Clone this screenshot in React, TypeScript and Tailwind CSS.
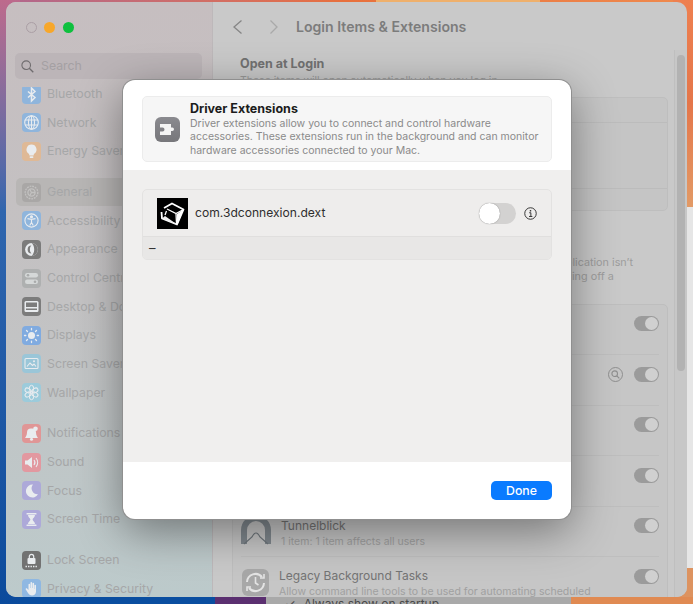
import React from "react";

const W = "#e9ecef";

const glyphs: Record<string, React.ReactNode> = {
  Bluetooth: <path d="M6 6.5l7 6-3.5 3.5V3L13 6.5l-7 6" fill="none" stroke={W} strokeWidth="1.5" />,
  Network: (
    <g fill="none" stroke={W} strokeWidth="1.1">
      <circle cx="9.5" cy="9.5" r="6.8" />
      <ellipse cx="9.5" cy="9.5" rx="3" ry="6.8" />
      <path d="M3 7h13M3 12h13M9.5 2.7v13.6" />
    </g>
  ),
  "Energy Saver": (
    <g fill={W}>
      <path d="M9.5 2.5a5 5 0 0 0-3 9c.7.6.8 1.4.9 2h4.2c.1-.6.2-1.4.9-2a5 5 0 0 0-3-9z" />
      <rect x="7.6" y="14.2" width="3.8" height="1.8" rx=".8" />
    </g>
  ),
  General: (
    <g fill="none" stroke="#c2c1c0" strokeWidth="1.3">
      <circle cx="9.5" cy="9.5" r="6.3" strokeDasharray="1.8 .9" />
      <circle cx="9.5" cy="9.5" r="3.6" />
      <path d="M9.5 9.5L13 9.5M9.5 9.5L7.8 6.5M9.5 9.5L7.8 12.5" />
    </g>
  ),
  Accessibility: (
    <g fill="none" stroke={W} strokeWidth="1.1">
      <circle cx="9.5" cy="9.5" r="6.6" />
      <circle cx="9.5" cy="5.8" r="1" fill={W} />
      <path d="M5.5 7.6l4 .8 4-.8M9.5 8.4v3l-1.8 3.2M9.5 11.4l1.8 3.2" />
    </g>
  ),
  Appearance: (
    <g>
      <circle cx="9.5" cy="9.5" r="6.4" fill={W} />
      <path d="M9.5 5.6a3.9 3.9 0 0 0 0 7.8c-1.2-1-1.6-2.4-1.6-3.9s.4-2.900 1.600-3.900z" fill="#7b7b7b" />
      <path d="M9.500 3.100a6.400 6.400 0 0 1 0 12.800c1.800-1.500 2.700-3.800 2.700-6.400s-.9-4.900-2.700-6.400z" fill="#7b7b7b" />
    </g>
  ),
  "Control Centre": (
    <g fill="#d5d8d8">
      <rect x="3" y="4" width="13" height="4.500" rx="2.200" />
      <rect x="3" y="10.500" width="13" height="4.500" rx="2.200" />
      <circle cx="6" cy="6.200" r="1.300" fill="#a9abab" />
      <circle cx="13" cy="12.700" r="1.300" fill="#a9abab" />
    </g>
  ),
  "Desktop & Dock": (
    <g>
      <rect x="2.500" y="4" width="14" height="11" rx="1.500" fill={W} />
      <rect x="4" y="5.500" width="11" height="4.500" fill="#7c7c7c" />
      <rect x="4" y="11.500" width="11" height="1.500" fill="#7c7c7c" />
    </g>
  ),
  Displays: (
    <g fill={W}>
      <circle cx="9.500" cy="9.500" r="3.500" />
      <g stroke={W} strokeWidth="1.300" strokeLinecap="round">
        <path d="M9.500 2.500v1.300M9.500 15.200v1.300M2.500 9.500h1.300M15.200 9.500h1.300M4.500 4.500l1 1M13.500 13.500l1 1M4.500 14.500l1-1M13.500 5.500l1-1" />
      </g>
    </g>
  ),
  "Screen Saver": (
    <g fill="none" stroke={W} strokeWidth="1.100">
      <rect x="3" y="4.500" width="13" height="10" rx="1" />
      <path d="M5 12.500l3-3.500 2.500 2.500 1.500-1.500 2 2.500" />
      <circle cx="12" cy="7.300" r="1" fill={W} stroke="none" />
    </g>
  ),
  Wallpaper: (
    <g fill="none" stroke={W} strokeWidth="1">
      <ellipse cx="9.500" cy="5.500" rx="2.200" ry="3.200" />
      <ellipse cx="9.500" cy="13.500" rx="2.200" ry="3.200" />
      <ellipse cx="9.500" cy="5.500" rx="2.200" ry="3.200" transform="rotate(60 9.500 9.500)" />
      <ellipse cx="9.500" cy="5.500" rx="2.200" ry="3.200" transform="rotate(120 9.500 9.500)" />
      <ellipse cx="9.500" cy="5.500" rx="2.200" ry="3.200" transform="rotate(240 9.500 9.500)" />
      <ellipse cx="9.500" cy="5.500" rx="2.200" ry="3.200" transform="rotate(300 9.500 9.500)" />
    </g>
  ),
  Notifications: (
    <g fill={W}>
      <path d="M9 4.500a4 4 0 0 0-4 4c0 3-1.500 4.500-2 5.500h13c-.5-1-2-2.500-2-5.500a4 4 0 0 0-4-4z" />
      <circle cx="9.500" cy="15.300" r="1.500" />
      <circle cx="13.500" cy="4.800" r="2.300" />
    </g>
  ),
  Sound: (
    <g>
      <path d="M3 7.500h2.500L10 4v11l-4.500-3.500H3z" fill={W} />
      <path d="M12 7a4 4 0 0 1 0 5M14 5a7 7 0 0 1 0 9" fill="none" stroke={W} strokeWidth="1.100" />
    </g>
  ),
  Focus: <path d="M11 3.500a6.500 6.500 0 1 0 5 9.800 6 6 0 0 1-5-9.800z" fill={W} />,
  "Screen Time": (
    <g fill={W}>
      <rect x="4.500" y="3" width="10" height="1.600" rx=".5" />
      <rect x="4.500" y="14.400" width="10" height="1.600" rx=".5" />
      <path d="M6 5h7c0 2.500-2.400 3-2.400 4.500S13 11.500 13 14H6c0-2.500 2.400-3 2.400-4.500S6 7.500 6 5z" />
    </g>
  ),
  "Lock Screen": (
    <g>
      <rect x="5.500" y="7" width="8" height="6" rx="1" fill={W} />
      <path d="M7.300 7V5.500a2.200 2.200 0 0 1 4.400 0V7" fill="none" stroke={W} strokeWidth="1.200" />
      <path d="M3.500 15.500h12" stroke={W} strokeWidth="1.300" strokeDasharray="1.400 1.100" />
    </g>
  ),
  "Privacy & Security": (
    <path
      d="M6.500 5.500a.8.800 0 0 1 1.600 0V9h.4V3.800a.8.800 0 0 1 1.600 0V9h.4V4.500a.8.800 0 0 1 1.600 0V10h.3V6.500a.8.800 0 0 1 1.600 0v6c0 2.500-1.800 4-4 4-2 0-3-1-4-2.500L3.800 10.500c-.5-.8.500-1.800 1.300-1l1.400 1.500z"
      fill={W}
    />
  ),
};

type Item = { label: string; bg: string };

const groups: Item[][] = [
  [
    { label: "Bluetooth", bg: "bg-[#8fb5dc]" },
    { label: "Network", bg: "bg-[#8fb5dc]" },
    { label: "Energy Saver", bg: "bg-[#dfb996]" },
  ],
  [
    { label: "General", bg: "bg-[#a9a7a6]" },
    { label: "Accessibility", bg: "bg-[#8fb5dc]" },
    { label: "Appearance", bg: "bg-[#7b7b7b]" },
    { label: "Control Centre", bg: "bg-[#aeb0b0]" },
    { label: "Desktop & Dock", bg: "bg-[#7c7c7c]" },
    { label: "Displays", bg: "bg-[#80abe0]" },
    { label: "Screen Saver", bg: "bg-[#9ac6d8]" },
    { label: "Wallpaper", bg: "bg-[#9ccbdb]" },
  ],
  [
    { label: "Notifications", bg: "bg-[#e09696]" },
    { label: "Sound", bg: "bg-[#e298a0]" },
    { label: "Focus", bg: "bg-[#ada9d9]" },
    { label: "Screen Time", bg: "bg-[#ada9d9]" },
  ],
  [
    { label: "Lock Screen", bg: "bg-[#727272]" },
    { label: "Privacy & Security", bg: "bg-[#8fb8e2]" },
  ],
];

function SideRow({ item, active }: { item: Item; active?: boolean }) {
  return (
    <div className={`flex h-[28.65px] shrink-0 items-center gap-[6px] rounded-[5px] pl-[6px] ${active ? "bg-[#b8b6b5]" : ""}`}>
      <svg width="19" height="19" viewBox="0 0 19 19" className={`shrink-0 rounded-[4px] ${item.bg}`}>
        {glyphs[item.label]}
      </svg>
      <span className="whitespace-nowrap text-[12.3px] leading-[12px] text-[#a6a7a8]">{item.label}</span>
    </div>
  );
}

function SmallToggle() {
  return (
    <div className="mt-[0.5px] flex h-[15px] w-[25px] shrink-0 items-center justify-end rounded-full bg-[#9b9b9b] pr-[1px]">
      <div className="h-[13px] w-[13px] rounded-full bg-[#d0d0d0]" />
    </div>
  );
}

function BgRow({ title, sub, icon, extra, textPad = "pl-[40px]" }: { title?: string; sub?: string; icon?: React.ReactNode; extra?: React.ReactNode; textPad?: string }) {
  return (
    <div className="relative flex h-[50.5px] shrink-0 items-start border-b border-[#bebebe] pt-[11px] last:border-b-0">
      {icon}
      <div className={`min-w-0 flex-1 ${textPad}`}>
        {title && <div className="text-[12px] leading-[16px] text-[#747474]">{title}</div>}
        {sub && <div className="whitespace-nowrap text-[10.5px] leading-[15px] text-[#a0a0a0]">{sub}</div>}
      </div>
      {extra}
      <SmallToggle />
    </div>
  );
}

export default function App() {
  return (
    <div className="relative h-[604px] w-[693px] overflow-hidden bg-[#0a4ea0]" style={{ fontFamily: "Inter, 'Liberation Sans', sans-serif" }}>
      {/* wallpaper */}
      <div className="absolute inset-x-0 top-0 h-[20px] bg-gradient-to-r from-[#b0668e] via-[#e8703c] to-[#ef8a4e]" />
      <div className="absolute left-[376px] top-0 h-[3px] w-[164px] bg-[#efb06c]" />
      <div className="absolute inset-y-0 left-0 w-[20px] bg-gradient-to-b from-[#bd6a8c] via-[#2f66ae] via-35% to-[#0a4a9c]" />
      <div className="absolute right-0 top-0 h-[207px] w-[20px] bg-gradient-to-b from-[#ee8050] via-[#e4764a] via-50% to-[#e29a66]" />
      <div className="absolute right-0 top-[207px] h-[362px] w-[20px] bg-[#e6e6e6]" />
      <div className="absolute bottom-0 right-0 h-[36px] w-[20px] bg-[#dd9360]" />
      <div className="absolute bottom-0 left-[215px] h-[7px] w-[51px] bg-[#5b2f70]" />
      <div className="absolute bottom-0 left-[570px] h-[7px] w-[123px] bg-[#e08a52]" />
      <div className="absolute bottom-0 left-[266px] flex h-[7px] w-[305px] items-start overflow-hidden bg-[#a9a9a9] pl-[19px] text-[12px] leading-[14px] text-[#4a4a4a]">
        <span className="mr-[8px]">✓</span>
        <span>Always show on startup</span>
      </div>

      {/* settings window */}
      <div className="relative ml-[6px] mt-[2px] flex h-[595px] w-[681px] overflow-hidden rounded-[10px] bg-[#c9c9c9]">
        <aside className="flex w-[206px] shrink-0 flex-col bg-gradient-to-b from-[#c6bec0] via-[#c3c2c3] to-[#bccacb]">
          <div className="flex items-center gap-[7.5px] pl-[19.5px] pt-[20px]">
            <span className="h-[11px] w-[11px] rounded-full border border-[#ab9fa5]" />
            <span className="h-[11px] w-[11px] rounded-full bg-[#f7a72a]" />
            <span className="h-[11px] w-[11px] rounded-full bg-[#0ec03e]" />
          </div>
          <div className="ml-[9px] mt-[20px] flex h-[26px] w-[187px] shrink-0 items-center gap-[7px] rounded-[5px] bg-[#bcb5b8] pl-[6px]">
            <svg width="13" height="13" viewBox="0 0 13 13" className="shrink-0">
              <circle cx="5.200" cy="5.200" r="4.300" fill="none" stroke="#6f6c6e" strokeWidth="1.100" />
              <path d="M8.300 8.300l4 4" stroke="#6f6c6e" strokeWidth="1.300" />
            </svg>
            <span className="text-[12.3px] text-[#a4a0a3]">Search</span>
          </div>
          <div className="mx-[10px] mt-[8px] min-h-0 flex-1 overflow-hidden">
            <div className="-mt-[7.3px] flex flex-col gap-[12.2px]">
              {groups.map((g, i) => (
                <div key={i} className="flex flex-col">
                  {g.map((it) => (
                    <SideRow key={it.label} item={it} active={it.label === "General"} />
                  ))}
                </div>
              ))}
            </div>
          </div>
        </aside>

        <main className="min-w-0 flex-1 overflow-hidden border-l border-[#bdb8ba]">
          <div className="flex h-[50px] items-center pl-[19px]">
            <svg width="11" height="16" viewBox="0 0 11 16">
              <path d="M9.500 1.500L2 8l7.500 6.500" fill="none" stroke="#868686" strokeWidth="1.300" />
            </svg>
            <svg width="9" height="16" viewBox="0 0 9 16" className="ml-[26px]">
              <path d="M1.500 1.500L8 8l-6.500 6.500" fill="none" stroke="#a9a9a9" strokeWidth="1.300" />
            </svg>
            <span className="ml-[18px] text-[14.100px] font-semibold text-[#7c7c7c]">Login Items &amp; Extensions</span>
          </div>
          <div className="pl-[27px] pt-[1px]">
            <div className="pt-[3px] text-[12.500px] font-bold leading-[16px] text-[#727272]">Open at Login</div>
            <div className="pt-[2px] text-[10.500px] leading-[14px] text-[#9a9a9a]">These items will open automatically when you log in</div>
          </div>
          <div className="ml-[19px] mt-[9px] h-[114px] w-[436px] rounded-[5px] border border-[#bebebe] bg-[#c5c5c5]">
            <div className="h-[25px] border-b border-[#bcbcbc]" />
            <div className="h-[66px] border-b border-[#bcbcbc]" />
          </div>
          <div className="ml-[19px] mt-[45px] w-[401px] text-[10.800px] leading-[14px] text-[#9d9d9d]">
            <div className="whitespace-nowrap text-right">Extensions can run when the application isn’t</div>
            <div className="ml-[340px] whitespace-nowrap">ing off a</div>
          </div>
          <div className="ml-[19px] mt-[19.700px] w-[436px] rounded-[5px] border border-[#bebebe] bg-[#c6c6c6] px-[8px]">
            <BgRow />
            <BgRow
              extra={
                <span className="mr-[11px] mt-[0.5px] flex h-[15px] w-[15px] items-center justify-center rounded-full border border-[#8f8f8f]">
                  <svg width="9" height="9" viewBox="0 0 9 9">
                    <circle cx="3.700" cy="3.700" r="2.800" fill="none" stroke="#8f8f8f" strokeWidth="1.100" />
                    <path d="M5.800 5.800l2.500 2.500" stroke="#8f8f8f" strokeWidth="1.200" />
                  </svg>
                </span>
              }
            />
            <BgRow />
            <BgRow />
            <BgRow
              title="Tunnelblick"
              sub="1 item: 1 item affects all users"
              icon={
                <svg width="30" height="30" viewBox="0 0 30 30" className="absolute left-0 top-[8px]">
                  <path d="M0 29V15a15 15 0 0 1 30 0v14h-6V15a9 9 0 0 0-18 0v14z" fill="#80888e" />
                  <path d="M3 29 11 22q4-8 8 0l8 7" fill="none" stroke="#6e767c" strokeWidth="1.200" />
                </svg>
              }
              textPad="pl-[40px]"
            />
            <BgRow
              title="Legacy Background Tasks"
              sub="Allow command line tools to be used for automating scheduled"
              icon={
                <svg width="27" height="27" viewBox="0 0 27 27" className="absolute left-[1px] top-[12px]">
                  <rect width="27" height="27" rx="6" fill="#a8a8a8" />
                  <path d="M5 13a8.500 8.500 0 0 1 15-5M22 14a8.500 8.500 0 0 1-15 5" fill="none" stroke="#e4e4e4" strokeWidth="2" />
                  <path d="M18 9h4V5M9 18H5v4" fill="none" stroke="#e4e4e4" strokeWidth="1.600" />
                  <path d="M13.500 8v6l3 2" fill="none" stroke="#e4e4e4" strokeWidth="1.600" />
                </svg>
              }
              textPad="pl-[38px]"
            />
          </div>
        </main>

        {/* scrollbar */}
        <div className="absolute bottom-0 right-0 top-[48px] w-[13px] border-l border-[#bfbfbf] bg-[#c7c7c7]">
          <div className="ml-[2px] mt-[5px] h-[316px] w-[8px] rounded-full bg-[#b2b2b2]" />
        </div>
      </div>

      {/* sheet */}
      <div className="absolute left-[123px] top-[80px] flex h-[439px] w-[448px] flex-col overflow-hidden rounded-[12px] bg-white shadow-[0_0_0_1px_#8f8f8f,0_12px_45px_rgba(0,0,0,0.42)]">
        <div className="h-[90px] shrink-0 px-[19px] pt-[16px]">
          <div className="flex h-[66px] items-center rounded-[5px] border border-[#ececec] bg-[#f6f6f6] pl-[12px]">
            <svg width="25" height="25" viewBox="0 0 25 25" className="shrink-0">
              <defs>
                <linearGradient id="dg" x1="0" y1="0" x2="0" y2="1">
                  <stop offset="0" stopColor="#8a8a8f" />
                  <stop offset="1" stopColor="#77777b" />
                </linearGradient>
              </defs>
              <rect width="25" height="25" rx="6" fill="url(#dg)" />
              <path d="M5 7h11v3.500h1.300a1.700 1.700 0 0 1 0 3.400H16V18H5v-3.600h2.600a1.900 1.900 0 0 0 0-3.800H5z" fill="#f4f4f4" />
            </svg>
            <div className="ml-[10px] min-w-0">
              <div className="text-[12.500px] font-bold leading-[16px] text-[#1c1c1c]">Driver Extensions</div>
              <div className="w-[352px] text-[10.500px] leading-[13.400px] text-[#8a8a8a]">
                Driver extensions allow you to connect and control hardware accessories. These extensions run in the background and can monitor hardware accessories connected to your Mac.
              </div>
            </div>
          </div>
        </div>
        <div className="flex-1 bg-[#f0efee] px-[19px] pt-[19px]">
          <div className="overflow-hidden rounded-[5px] border border-[#e3e2e1] bg-[#eeedec]">
            <div className="flex h-[47px] items-center border-b border-[#e0dfde] pl-[14px] pr-[14px]">
              <svg width="31" height="31" viewBox="0 0 31 31" className="shrink-0">
                <rect width="31" height="31" fill="#000" />
                <path d="M7 10 15 5.500 26.500 11.500 20 26.500 5 20.500 4.500 14" fill="none" stroke="#fff" strokeWidth="1.800" strokeLinejoin="round" />
                <path d="M10 11 19 15.500 26.500 11.500M19 15.500 19.500 26M8 17 9.500 13" fill="none" stroke="#fff" strokeWidth="1.300" />
                <path d="M26.500 11.500 20 16 19.500 26.500 21 25.500z" fill="#fff" />
                <path d="M5 20.500 8 18 18 25 19.500 26.500z" fill="#eeeeee" />
              </svg>
              <span className="ml-[7px] flex-1 pt-[1px] text-[12.100px] text-[#2e2e2e]">com.3dconnexion.dext</span>
              <div className="flex h-[21px] w-[37px] items-center rounded-full bg-[#d3d2d1]">
                <div className="h-[21px] w-[21px] rounded-full bg-white shadow-[0_0_1px_rgba(0,0,0,0.5)]" />
              </div>
              <svg width="13" height="13" viewBox="0 0 14 14" className="ml-[8px] shrink-0">
                <circle cx="7" cy="7" r="6.200" fill="none" stroke="#2a2a2a" strokeWidth="1" />
                <circle cx="7" cy="4" r="0.900" fill="#2a2a2a" />
                <path d="M5.600 6.200H7.400V10M5.400 10.200H9" fill="none" stroke="#2a2a2a" strokeWidth="1" />
              </svg>
            </div>
            <div className="flex h-[22px] items-center bg-[#e8e7e6] pl-[6px] text-[13px] leading-[13px] text-[#333333]">–</div>
          </div>
        </div>
        <div className="flex h-[57px] shrink-0 items-start justify-end px-[19px] pt-[19px]">
          <button className="h-[19px] w-[61px] rounded-[5px] bg-[#0a7bff] text-[12.300px] font-medium leading-[19px] text-white">Done</button>
        </div>
      </div>
    </div>
  );
}
